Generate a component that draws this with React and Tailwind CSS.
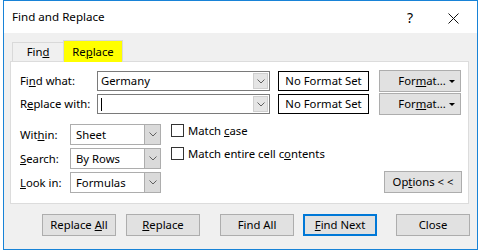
import React from 'react';

const Chevron = () => (
  <svg width="8" height="5" viewBox="0 0 8 5" className="block">
    <polyline points="0.5,0.5 4,4 7.5,0.5" fill="none" stroke="#606060" strokeWidth="1" />
  </svg>
);

const Combo = ({ value, width, caret }) => (
  <div className={`${width} h-full border border-[#7a7a7a] bg-white flex items-stretch`}>
    <div className="flex-1 flex items-center pl-[3px]">
      {value}
      {caret && <span className="w-px h-[13px] bg-black" />}
    </div>
    <div className="w-[15px] m-px bg-[#e5e5e5] border border-[#cfcfcf] flex items-center justify-center">
      <Chevron />
    </div>
  </div>
);

const Select = ({ value }) => (
  <div className="w-[91px] h-full border border-[#adadad] bg-white flex items-stretch">
    <div className="flex-1 flex items-center pl-[5px]">{value}</div>
    <div className="w-[16px] bg-[#dadada] border-l border-[#adadad] flex items-center justify-center">
      <Chevron />
    </div>
  </div>
);

const Btn = ({ children, className = '' }) => (
  <div className={`h-[22px] bg-[#e1e1e1] border border-[#adadad] flex items-center justify-center ${className}`}>
    <span>{children}</span>
  </div>
);

const FormatBtn = () => (
  <div className="w-[82px] h-[22px] bg-[#e1e1e1] border border-[#adadad] flex items-center justify-center relative">
    <span className="pl-[4px]">For<u>m</u>at...</span>
    <span className="absolute right-[5px] top-[9px] w-0 h-0 border-l-[3px] border-r-[3px] border-t-[3px] border-l-transparent border-r-transparent border-t-black" />
  </div>
);

const NoFormat = () => (
  <div className="w-[91px] h-full border border-black bg-white flex items-center justify-center">
    No Format Set
  </div>
);

const Checkbox = ({ children }) => (
  <div className="flex items-center h-[13px]">
    <span className="w-[13px] h-[13px] border border-[#333] bg-white" />
    <span className="ml-[4px]">{children}</span>
  </div>
);

export default function App() {
  return (
    <div className="w-[481px] h-[252px] bg-white text-[11.3px] text-black font-['Noto_Sans',sans-serif] leading-none">
      <div className="ml-[3px] w-[475px] h-[250px] border border-[#1883d7] bg-[#f0f0f0] flex flex-col">
        {/* Title bar */}
        <div className="h-[32px] bg-white flex items-center pl-[8px] relative">
          <span className="text-[11.6px]">Find and Replace</span>
          <span className="absolute left-[403px] top-[10px] text-[14px]">?</span>
          <svg width="11" height="11" viewBox="0 0 11 11" className="absolute left-[444px] top-[12px]">
            <path d="M0.5 0.5 L10.5 10.5 M10.5 0.5 L0.5 10.5" stroke="#111" strokeWidth="1" />
          </svg>
        </div>

        {/* Tabs */}
        <div className="mt-[7px] ml-[6px] h-[21px] flex items-end pl-[2px] relative z-10">
          <div className="w-[51px] h-[19px] border-t border-l border-[#d9d9d9] flex items-center justify-center">
            <span>Fin<u>d</u></span>
          </div>
          <div className="w-[60px] h-[22px] -mb-px bg-[#ffff00] border border-b-0 border-[#d9d9d9] flex items-center justify-center">
            <span>Re<u>p</u>lace</span>
          </div>
        </div>

        {/* Panel */}
        <div className="ml-[6px] w-[459px] h-[143px] border border-[#dcdcdc] bg-white pt-[9px] pl-[9px] flex flex-col">
          <div className="h-[20px] flex items-center">
            <span className="w-[77px]">Fi<u>n</u>d what:</span>
            <Combo value="Germany" width="w-[173px]" />
            <div className="ml-[8px] h-full"><NoFormat /></div>
            <div className="ml-[10px]"><FormatBtn /></div>
          </div>
          <div className="mt-[3px] h-[20px] flex items-center">
            <span className="w-[77px]">R<u>e</u>place with:</span>
            <Combo value="" width="w-[173px]" caret />
            <div className="ml-[8px] h-full"><NoFormat /></div>
            <div className="ml-[10px]"><FormatBtn /></div>
          </div>

          <div className="mt-[10px] flex">
            <div className="flex flex-col gap-[3px]">
              <div className="h-[21px] flex items-center">
                <span className="w-[50px]">Wit<u>h</u>in:</span>
                <Select value="Sheet" />
              </div>
              <div className="h-[21px] flex items-center">
                <span className="w-[50px]"><u>S</u>earch:</span>
                <Select value="By Rows" />
              </div>
              <div className="h-[21px] flex items-center">
                <span className="w-[50px]"><u>L</u>ook in:</span>
                <Select value="Formulas" />
              </div>
            </div>
            <div className="ml-[10px] flex flex-col gap-[10px]">
              <Checkbox>Match <u>c</u>ase</Checkbox>
              <Checkbox>Match entire cell c<u>o</u>ntents</Checkbox>
            </div>
            <div className="ml-auto mr-[6px] self-end">
              <Btn className="w-[78px]">Op<u>t</u>ions &lt; &lt;</Btn>
            </div>
          </div>
        </div>

        {/* Bottom buttons */}
        <div className="mt-[10px] pl-[38px] flex">
          <Btn className="w-[74px]">Replace <u>A</u>ll</Btn>
          <Btn className="w-[74px] ml-[10px]"><u>R</u>eplace</Btn>
          <Btn className="w-[74px] ml-[20px]">Find All</Btn>
          <div className="w-[74px] h-[22px] ml-[9px] bg-[#e1e1e1] border-2 border-[#0078d7] flex items-center justify-center">
            <span><u>F</u>ind Next</span>
          </div>
          <Btn className="w-[74px] ml-[19px]">Close</Btn>
        </div>
      </div>
    </div>
  );
}
